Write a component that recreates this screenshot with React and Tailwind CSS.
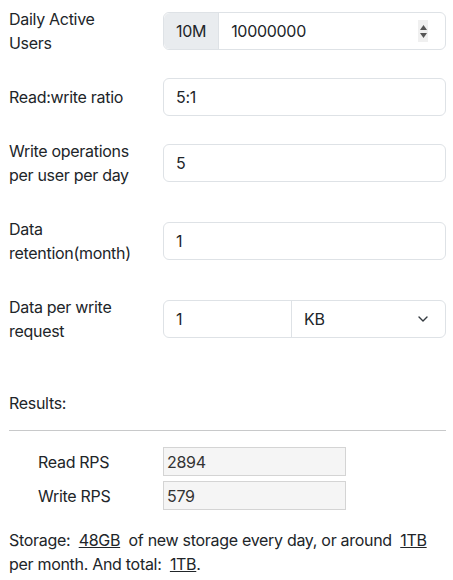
import React from "react";

const Chevron = () => (
  <svg width="12" height="8" viewBox="0 0 12 8" fill="none">
    <path d="M2 2l4 4 4-4" stroke="#343a40" strokeWidth="1.4" strokeLinecap="round" strokeLinejoin="round" />
  </svg>
);

const Spinner = () => (
  <div className="flex h-[22px] w-[10px] flex-col items-center justify-center gap-[3px] bg-[#f0f0f0]">
    <svg width="7" height="5" viewBox="0 0 7 5">
      <path d="M0 5L3.5 0L7 5Z" fill="#555" />
    </svg>
    <svg width="7" height="5" viewBox="0 0 7 5">
      <path d="M0 0L3.5 5L7 0Z" fill="#555" />
    </svg>
  </div>
);

const Row = ({ label, children, last }) => (
  <div className={`flex items-center ${last ? "" : "mb-4"}`}>
    <label className="w-[154px] shrink-0 py-[7px] pr-[19px] leading-6">{label}</label>
    <div className="flex-1">{children}</div>
  </div>
);

const inputCls = "block h-[38px] w-full rounded-md border border-[#dee2e6] bg-white px-3 leading-6 outline-none";

const App = () => {
  const results = [
    { label: "Read RPS", value: "2894" },
    { label: "Write RPS", value: "579" },
  ];
  return (
    <div className="min-h-[580px] bg-white pl-[9px] pr-[7px] text-[16px] tracking-[-0.3px] text-[#212529]" style={{ fontFamily: "Inter, 'Liberation Sans', sans-serif" }}>
      <Row label={<>Daily Active<br />Users</>}>
        <div className="flex h-[38px] w-full rounded-md border border-[#dee2e6]">
          <span className="flex items-center rounded-l-md border-r border-[#dee2e6] bg-[#e9ecef] px-3">10M</span>
          <div className="flex flex-1 items-center justify-between pl-3 pr-[17px]">
            <span>10000000</span>
            <Spinner />
          </div>
        </div>
      </Row>
      <Row label="Read:write ratio">
        <input className={inputCls} defaultValue="5:1" />
      </Row>
      <Row label="Write operations per user per day">
        <input className={inputCls} defaultValue="5" />
      </Row>
      <Row label="Data retention(month)">
        <input className={inputCls} defaultValue="1" />
      </Row>
      <Row label="Data per write request" last>
        <div className="flex h-[38px] w-full rounded-md border border-[#dee2e6]">
          <div className="flex flex-1 items-center px-3">1</div>
          <div className="flex w-[154px] items-center justify-between border-l border-[#dee2e6] pl-3 pr-4">
            <span>KB</span>
            <Chevron />
          </div>
        </div>
      </Row>

      <div className="mt-[41px] leading-6">Results:</div>
      <hr className="mt-[15px] border-t border-[#c8c9ca]" />

      <div className="mt-[16px] flex flex-col gap-[5px]">
        {results.map((r) => (
          <div key={r.label} className="flex items-center">
            <span className="w-[154px] shrink-0 pl-[29px]">{r.label}</span>
            <div className="flex h-[29px] w-[183px] items-center border border-[#d4d4d4] bg-[#f5f5f5] px-[3px] text-[#333]">
              {r.value}
            </div>
          </div>
        ))}
      </div>

      <p className="mt-[18px] leading-6">
        Storage:{"\u00a0 "}<u>48GB</u>{"\u00a0 "}of new storage every day, or around{"\u00a0 "}<u>1TB</u> per month. And total:{"\u00a0 "}<u>1TB</u>.
      </p>
    </div>
  );
};

export default App;
